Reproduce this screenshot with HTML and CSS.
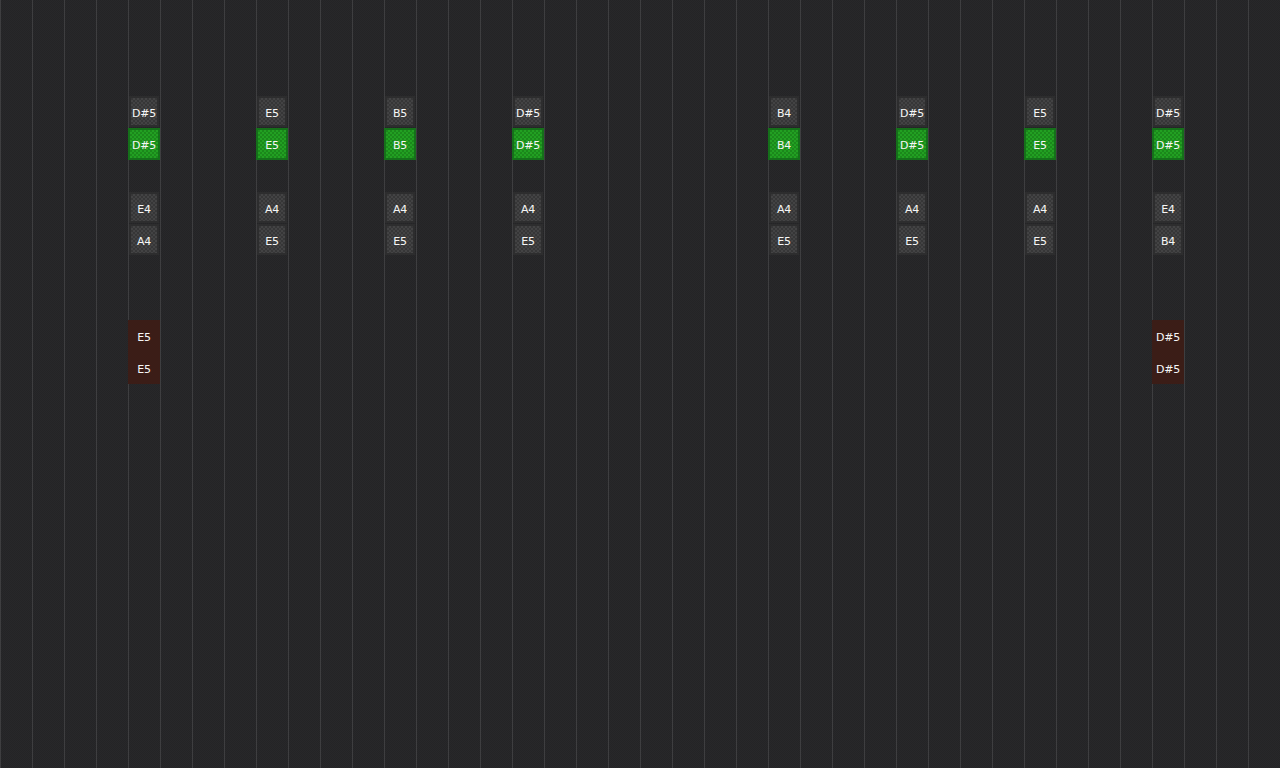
FILE: index.html
```html
<!DOCTYPE html>
<html>
<head>
<meta charset="utf-8">
<link rel="stylesheet" href="styles.css">
<title>Chord lanes</title>
</head>
<body>
<div class="board">
  <div class="lane"></div><div class="lane"></div><div class="lane"></div><div class="lane"></div>
  <div class="lane">
    <div class="note ghost r3">D#5</div>
    <div class="note hit r4">D#5</div>
    <div class="note ghost r6">E4</div>
    <div class="note ghost r7">A4</div>
    <div class="note held r10">E5</div>
    <div class="note held r11">E5</div>
  </div>
  <div class="lane"></div><div class="lane"></div><div class="lane"></div>
  <div class="lane">
    <div class="note ghost r3">E5</div>
    <div class="note hit r4">E5</div>
    <div class="note ghost r6">A4</div>
    <div class="note ghost r7">E5</div>
  </div>
  <div class="lane"></div><div class="lane"></div><div class="lane"></div>
  <div class="lane">
    <div class="note ghost r3">B5</div>
    <div class="note hit r4">B5</div>
    <div class="note ghost r6">A4</div>
    <div class="note ghost r7">E5</div>
  </div>
  <div class="lane"></div><div class="lane"></div><div class="lane"></div>
  <div class="lane">
    <div class="note ghost r3">D#5</div>
    <div class="note hit r4">D#5</div>
    <div class="note ghost r6">A4</div>
    <div class="note ghost r7">E5</div>
  </div>
  <div class="lane"></div><div class="lane"></div><div class="lane"></div>
  <div class="lane"></div><div class="lane"></div><div class="lane"></div><div class="lane"></div>
  <div class="lane">
    <div class="note ghost r3">B4</div>
    <div class="note hit r4">B4</div>
    <div class="note ghost r6">A4</div>
    <div class="note ghost r7">E5</div>
  </div>
  <div class="lane"></div><div class="lane"></div><div class="lane"></div>
  <div class="lane">
    <div class="note ghost r3">D#5</div>
    <div class="note hit r4">D#5</div>
    <div class="note ghost r6">A4</div>
    <div class="note ghost r7">E5</div>
  </div>
  <div class="lane"></div><div class="lane"></div><div class="lane"></div>
  <div class="lane">
    <div class="note ghost r3">E5</div>
    <div class="note hit r4">E5</div>
    <div class="note ghost r6">A4</div>
    <div class="note ghost r7">E5</div>
  </div>
  <div class="lane"></div><div class="lane"></div><div class="lane"></div>
  <div class="lane">
    <div class="note ghost r3">D#5</div>
    <div class="note hit r4">D#5</div>
    <div class="note ghost r6">E4</div>
    <div class="note ghost r7">B4</div>
    <div class="note held r10">D#5</div>
    <div class="note held r11">D#5</div>
  </div>
  <div class="lane"></div><div class="lane"></div><div class="lane"></div>
</div>
</body>
</html>
```

FILE: styles.css
```css
html, body {
  margin: 0;
  padding: 0;
  width: 1280px;
  height: 768px;
  overflow: hidden;
  background: #262628;
}

.board {
  display: flex;
  width: 1280px;
  height: 768px;
  background-color: #262628;
  background-image:
    repeating-conic-gradient(#28282a 0 25%, #242426 0 50%);
  background-size: 2px 2px;
}

.lane {
  flex: 0 0 32px;
  box-sizing: border-box;
  border-left: 1px solid #3e3e40;
  display: grid;
  grid-template-rows: repeat(24, 32px);
  grid-template-columns: 31px;
}

.note {
  box-sizing: border-box;
  display: flex;
  align-items: center;
  justify-content: center;
  font-family: "DejaVu Sans", Verdana, sans-serif;
  font-size: 11px;
  color: #f6f6f6;
  letter-spacing: -0.2px;
}

.r3 { grid-row: 4; }
.r4 { grid-row: 5; }
.r6 { grid-row: 7; }
.r7 { grid-row: 8; }
.r10 { grid-row: 11; }
.r11 { grid-row: 12; }

/* upcoming note: dim checkered tile */
.ghost {
  width: 30px;
  height: 31px;
  margin: 0 0 1px 0;
  border: 2px solid #2d2d2e;
  background-color: #3a3a3b;
  background-image:
    repeating-conic-gradient(#434344 0 25%, #363637 0 50%);
  background-size: 4px 4px;
  background-clip: padding-box;
  padding-top: 3px;
}

/* played note: bright green tile across the whole cell */
.hit {
  width: 32px;
  height: 32px;
  margin-left: -1px;
  border: 2px solid #15701a;
  background-color: #1f961f;
  background-image:
    repeating-conic-gradient(#22a022 0 25%, #1b881b 0 50%);
  background-size: 4px 4px;
  padding-top: 2px;
}

/* sustained note: dark red band */
.held {
  width: 32px;
  height: 32px;
  margin-left: -1px;
  background: #3b1d17;
  padding-top: 2px;
}
```
